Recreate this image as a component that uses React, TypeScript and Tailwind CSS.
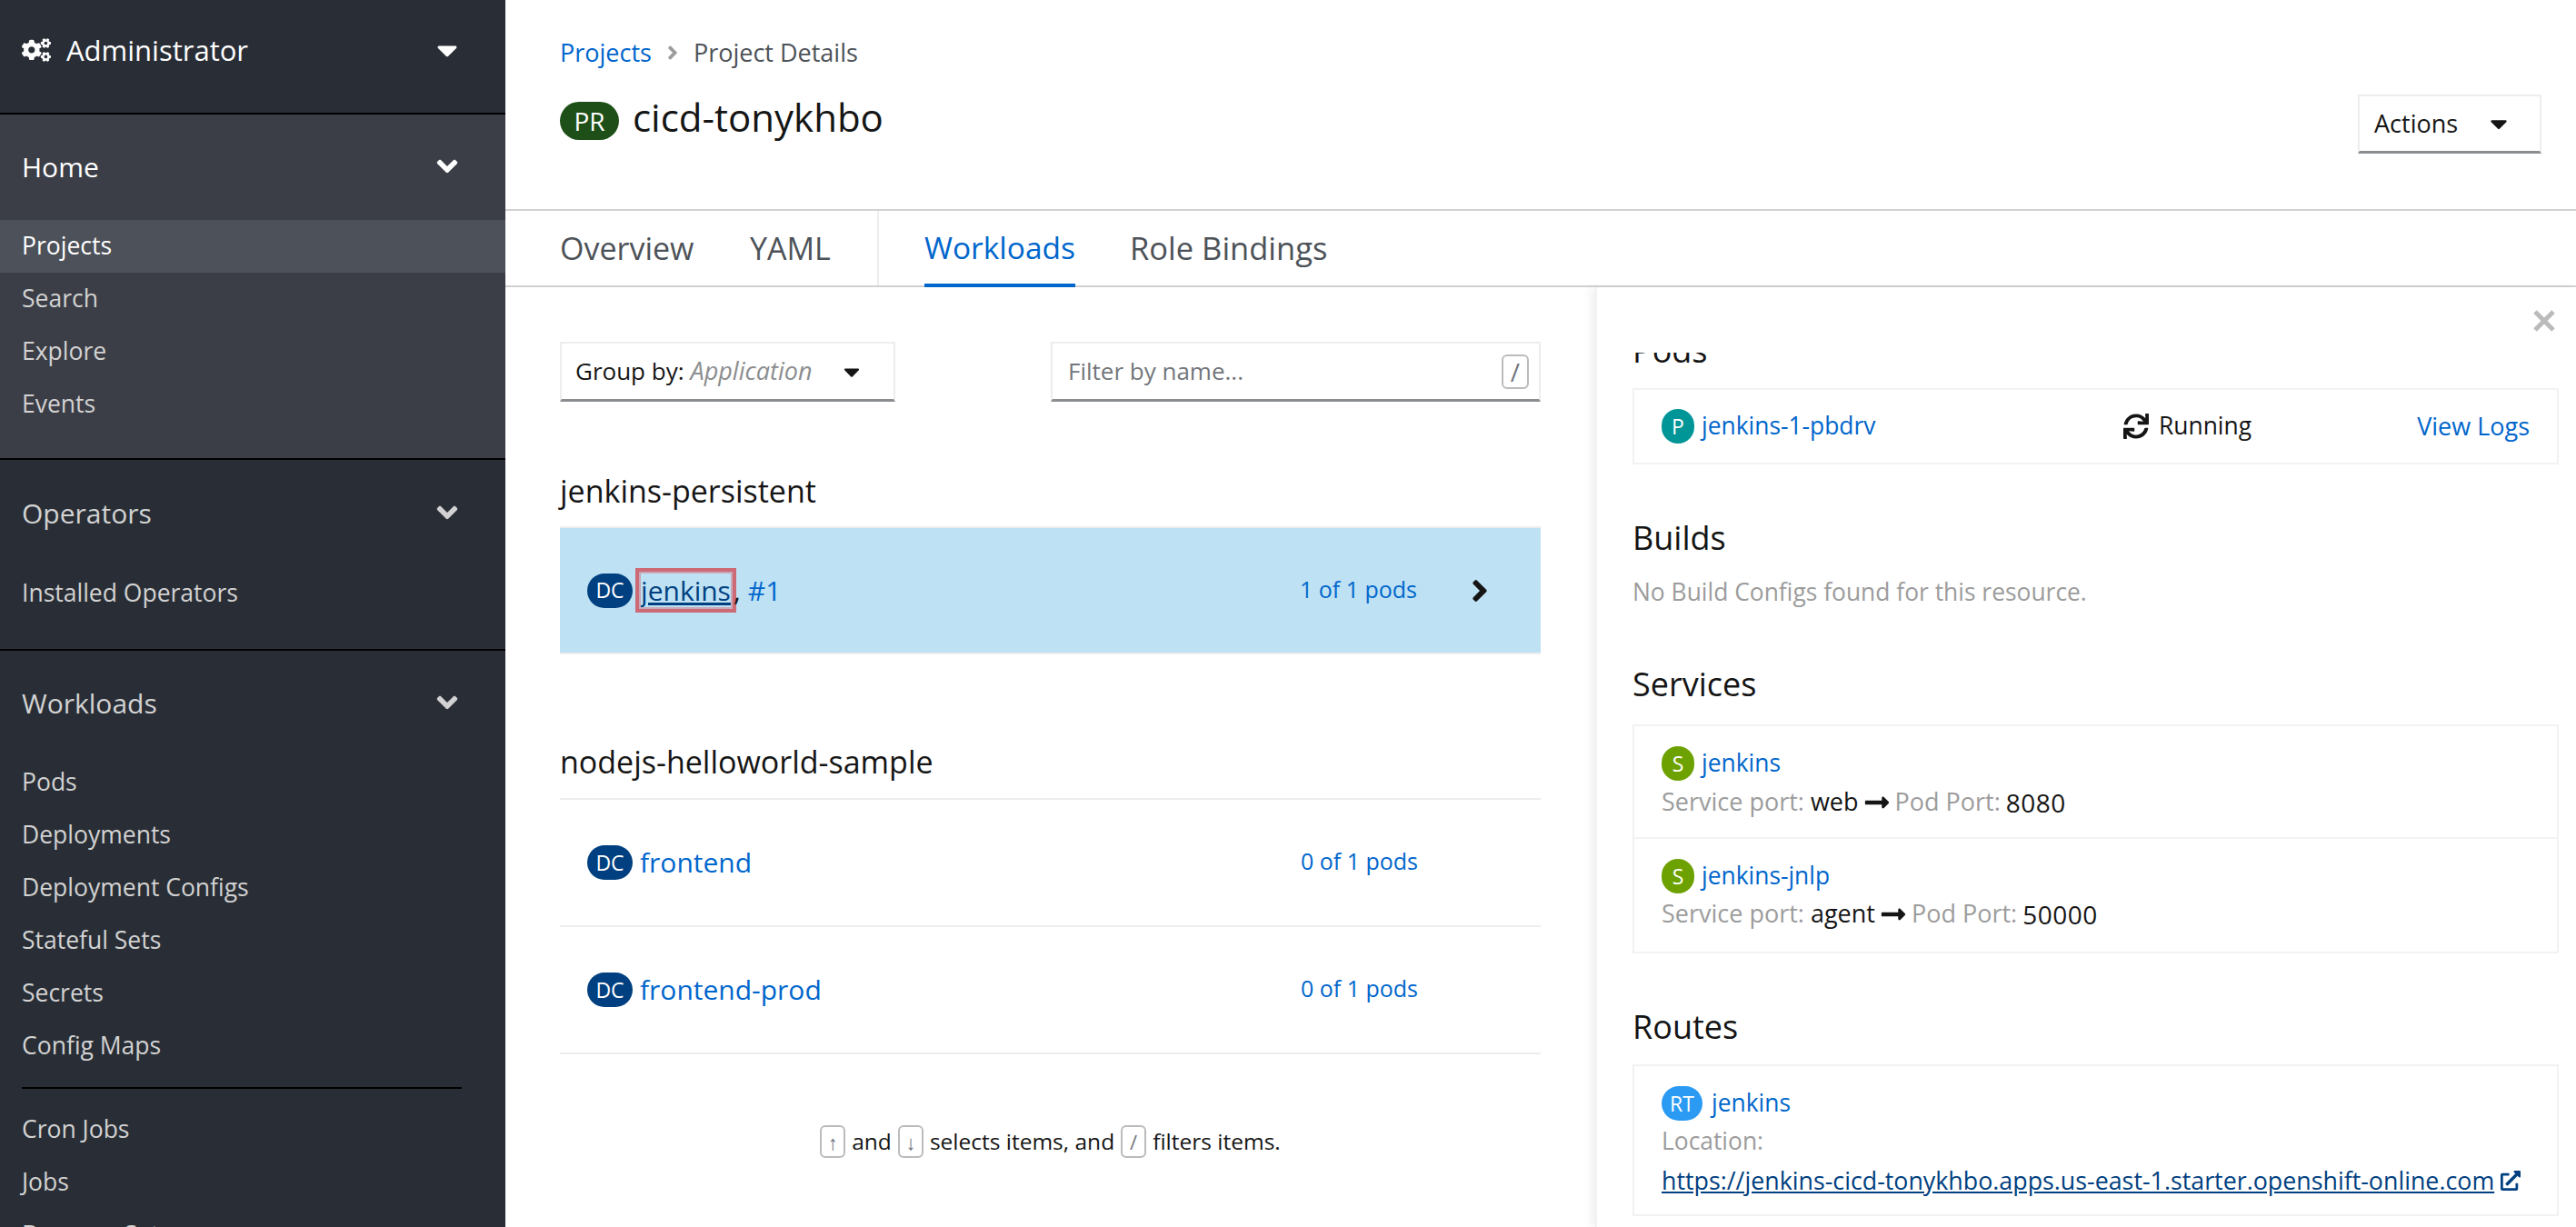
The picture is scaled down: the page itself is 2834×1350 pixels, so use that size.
import React from 'react';
import {
  FaAngleDown,
  FaAngleRight,
  FaCaretDown,
  FaCogs,
  FaExternalLinkAlt,
  FaLongArrowAltRight,
  FaSync,
} from 'react-icons/fa';

const NavItem: React.FC<{ label: string; active?: boolean }> = ({ label, active }) => (
  <div className={`h-[58px] flex items-center pl-[24px] pb-[1px] text-[26.5px] ${active ? 'bg-[#4d515a] text-white' : 'text-[#d2d2d2]'}`}>
    {label}
  </div>
);

const NavHeader: React.FC<{ label: string; height: string; light?: boolean }> = ({ label, height, light }) => (
  <div className={`${height} flex items-center justify-between pl-[24px] pr-[46px] pb-[2px] text-[30px] ${light ? 'text-white' : 'text-[#d2d2d2]'}`}>
    <span>{label}</span>
    <FaAngleDown className="w-[36px] h-[36px]" />
  </div>
);

const Badge: React.FC<{ text: string; color: string; width: string }> = ({ text, color, width }) => (
  <span className={`${color} ${width} h-[38px] rounded-[19px] flex items-center justify-center text-white text-[23px] shrink-0`}>
    {text}
  </span>
);

const WorkloadRow: React.FC<{ name: string; pods: string }> = ({ name, pods }) => (
  <div className="h-[140px] border-b-2 border-[#ededed] flex items-center pl-[30px]">
    <Badge text="DC" color="bg-[#004080]" width="w-[50px]" />
    <a className="ml-[8px] flex-1 pb-[2px] text-[30px] font-medium text-[#0066cc]">{name}</a>
    <span className="pb-[2px] text-[25px] text-[#0066cc] mr-[135px]">{pods}</span>
  </div>
);

const Kbd: React.FC<{ children: React.ReactNode; big?: boolean }> = ({ children, big }) => (
  <span className={`inline-flex items-center justify-center border-2 border-[#bbbbbb] rounded-[6px] text-[#72767b] ${big ? 'w-[30px] h-[38px] text-[28px]' : 'w-[28px] h-[36px] text-[22px]'}`}>
    {children}
  </span>
);

const PanelHeading: React.FC<{ children: React.ReactNode }> = ({ children }) => (
  <h2 className="text-[36px] leading-[48px] text-[#151515]">{children}</h2>
);

const PortLine: React.FC<{ service: string; port: string; top: string }> = ({ service, port, top }) => (
  <div className={`${top} h-[30px] flex items-center text-[27px] text-[#9c9c9c]`}>
    Service port:
    <span className="text-[#151515] ml-[7px]">{service}</span>
    <FaLongArrowAltRight className="w-[30px] h-[30px] text-[#151515] mx-[5px]" />
    Pod Port:
    <span className="text-[#151515] ml-[6px] text-[28px] tracking-[0.5px]">{port}</span>
  </div>
);

export default function App() {
  return (
    <div className="flex w-[2834px] h-[1350px] overflow-hidden bg-white font-['Open_Sans',sans-serif] text-[#151515]">
      {/* Sidebar */}
      <aside className="w-[556px] shrink-0 bg-[#292e36] overflow-hidden">
        <div className="h-[126px] border-b-2 border-black flex items-center justify-between pl-[24px] pr-[46px] pb-[14px] text-white text-[31px]">
          <span className="flex items-center gap-[17px]">
            <FaCogs className="w-[32px] h-[32px]" />
            Administrator
          </span>
          <FaCaretDown className="w-[36px] h-[36px]" />
        </div>
        <div className="h-[380px] border-b-2 border-black bg-[#3b3e46]">
          <NavHeader label="Home" height="h-[116px]" light />
          <NavItem label="Projects" active />
          <NavItem label="Search" />
          <NavItem label="Explore" />
          <NavItem label="Events" />
        </div>
        <div className="h-[210px] border-b-2 border-black">
          <NavHeader label="Operators" height="h-[118px]" />
          <NavItem label="Installed Operators" />
        </div>
        <NavHeader label="Workloads" height="h-[116px]" />
        <NavItem label="Pods" />
        <NavItem label="Deployments" />
        <NavItem label="Deployment Configs" />
        <NavItem label="Stateful Sets" />
        <NavItem label="Secrets" />
        <NavItem label="Config Maps" />
        <div className="h-[2px] bg-black ml-[24px] mr-[48px] mt-[16px] mb-[16px]" />
        <NavItem label="Cron Jobs" />
        <NavItem label="Jobs" />
        <NavItem label="Daemon Sets" />
      </aside>

      {/* Main */}
      <main className="flex-1 flex flex-col min-w-0">
        <header className="h-[232px] shrink-0 border-b-2 border-[#d1d1d1] flex justify-between pl-[60px] pr-[38px]">
          <div>
            <div className="h-[36px] mt-[40px] flex items-center text-[27px] text-[#4d5258]">
              <a className="text-[#0066cc]">Projects</a>
              <FaAngleRight className="w-[24px] h-[24px] mx-[11px] text-[#9c9c9c]" />
              Project Details
            </div>
            <div className="mt-[36px] flex items-center">
              <span className="w-[65px] h-[42px] rounded-[21px] bg-[#1e4f18] text-white text-[28px] flex items-center justify-center">PR</span>
              <h1 className="ml-[15px] -mt-[8px] text-[42px] leading-[42px]">cicd-tonykhbo</h1>
            </div>
          </div>
          <button className="w-[202px] h-[65px] mt-[104px] border-2 border-[#ededed] border-b-[3px] border-b-[#8a8d90] flex items-center justify-between pl-[16px] pr-[30px] text-[27px]">
            Actions
            <FaCaretDown className="w-[30px] h-[30px]" />
          </button>
        </header>

        <nav className="h-[84px] shrink-0 border-b-2 border-[#d1d1d1] flex pl-[60px] text-[34px] text-[#4d5258]">
          <span className="w-[209px] flex items-center">Overview</span>
          <span className="w-[142px] flex items-center border-r-2 border-[#ededed]">YAML</span>
          <span className="ml-[50px] mr-[60px] w-[166px] flex items-center justify-center text-[33.5px] text-[#0066cc] border-b-[4px] border-[#0066cc] -mb-[2px]">Workloads</span>
          <span className="flex items-center text-[34.5px]">Role Bindings</span>
        </nav>

        <div className="flex flex-1 min-h-0">
          {/* Workload list */}
          <section className="w-[1199px] shrink-0 pl-[60px] pr-[60px] pt-[60px]">
            <div className="flex justify-between">
              <div className="w-[369px] h-[66px] border-2 border-[#ededed] border-b-[3px] border-b-[#8a8d90] flex items-center pl-[15px] text-[26px]">
                Group by:
                <em className="ml-[7px] text-[27px] text-[#8b8d8f]">Application</em>
                <FaCaretDown className="w-[28px] h-[28px] ml-[30px]" />
              </div>
              <div className="w-[539px] h-[66px] border-2 border-[#ededed] border-b-[3px] border-b-[#8a8d90] flex items-center justify-between pl-[17px] pr-[11px] text-[26px] text-[#72767b]">
                Filter by name...
                <Kbd big>/</Kbd>
              </div>
            </div>

            <h3 className="mt-[78px] h-[40px] flex items-center text-[34px]">jenkins-persistent</h3>
            <div className="mt-[19px] h-[141px] border-t-2 border-b-2 border-[#ededed] bg-[#bee1f4] flex items-center pl-[30px]">
              <Badge text="DC" color="bg-[#004080]" width="w-[50px]" />
              <div className="ml-[3px] flex-1 flex items-center text-[30px] font-medium">
                <span className="w-[111px] h-[49px] border-[4px] border-[#cc6a75] outline-2 outline-[#c9a9b8] -outline-offset-[6px] flex items-center justify-center">
                  <a className="text-[#004080] underline">jenkins</a>
                </span>
                <span className="-ml-[3px]">,</span>
                <a className="ml-[8px] text-[#0066cc]">#1</a>
              </div>
              <span className="pb-[2px] text-[25px] text-[#0066cc]">1 of 1 pods</span>
              <span className="w-[136px] ml-[1px] -mr-[1px] flex justify-center">
                <FaAngleRight className="w-[38px] h-[38px]" />
              </span>
            </div>

            <h3 className="mt-[98px] h-[40px] flex items-center text-[34px]">nodejs-helloworld-sample</h3>
            <div className="mt-[20px] border-t-2 border-[#ededed]">
              <WorkloadRow name="frontend" pods="0 of 1 pods" />
              <WorkloadRow name="frontend-prod" pods="0 of 1 pods" />
            </div>

            <div className="mt-[78px] flex items-center justify-center gap-[7px] text-[24.5px]">
              <Kbd>↑</Kbd>and<Kbd>↓</Kbd>selects items, and<Kbd>/</Kbd>filters items.
            </div>
          </section>

          {/* Side panel */}
          <section className="relative flex-1 min-w-0 border-l-2 border-[#f2f2f2] shadow-[-6px_0_8px_rgba(0,0,0,0.05)] pl-[39px] pr-[19px] pt-[72px]">
            <svg className="absolute right-[23px] top-[25px] w-[24px] h-[24px]" viewBox="0 0 24 24" stroke="#bbbbbb" strokeWidth="5">
              <path d="M2 2 L22 22 M22 2 L2 22" />
            </svg>

            <div className="h-[39px] overflow-hidden">
              <div className="-mt-[26px] text-[36px] leading-[48px]">Pods</div>
            </div>
            <div className="h-[84px] border-2 border-[#f2f2f2] flex items-center pl-[30px] pr-[30px] text-[26.4px]">
              <Badge text="P" color="bg-[#009596]" width="w-[36px]" />
              <a className="ml-[8px] w-[464px] text-[#0066cc]">jenkins-1-pbdrv</a>
              <FaSync className="w-[28px] h-[28px]" />
              <span className="ml-[11px] flex-1">Running</span>
              <a className="text-[27px] text-[#0066cc]">View Logs</a>
            </div>

            <div className="mt-[57px]"><PanelHeading>Builds</PanelHeading></div>
            <p className="mt-[18px] h-[36px] flex items-center text-[26.4px] text-[#9c9c9c]">No Build Configs found for this resource.</p>

            <div className="mt-[59px]"><PanelHeading>Services</PanelHeading></div>
            <div className="mt-[20px] border-2 border-[#f2f2f2]">
              <div className="h-[124px] border-b-2 border-[#f2f2f2] pl-[30px] pt-[21px]">
                <div className="flex items-center text-[26.4px]">
                  <Badge text="S" color="bg-[#6ca100]" width="w-[36px]" />
                  <a className="ml-[8px] text-[#0066cc]">jenkins</a>
                </div>
                <PortLine service="web" port="8080" top="mt-[8px]" />
              </div>
              <div className="h-[124px] pl-[30px] pt-[21px]">
                <div className="flex items-center text-[26.4px]">
                  <Badge text="S" color="bg-[#6ca100]" width="w-[36px]" />
                  <a className="ml-[8px] text-[#0066cc]">jenkins-jnlp</a>
                </div>
                <PortLine service="agent" port="50000" top="mt-[7px]" />
              </div>
            </div>

            <div className="mt-[57px]"><PanelHeading>Routes</PanelHeading></div>
            <div className="mt-[17px] h-[167px] border-2 border-[#f2f2f2] pl-[30px] pt-[21px] text-[26.4px]">
              <div className="flex items-center">
                <Badge text="RT" color="bg-[#2b9af3]" width="w-[45px]" />
                <a className="ml-[10px] text-[#0066cc]">jenkins</a>
              </div>
              <div className="mt-[4px] h-[36px] flex items-center text-[#9c9c9c]">Location:</div>
              <a className="mt-[5px] flex items-center text-[26.8px] text-[#004080] underline whitespace-nowrap">
                https://jenkins-cicd-tonykhbo.apps.us-east-1.starter.openshift-online.com
                <FaExternalLinkAlt className="w-[22px] h-[22px] ml-[7px]" />
              </a>
            </div>
          </section>
        </div>
      </main>
    </div>
  );
}
